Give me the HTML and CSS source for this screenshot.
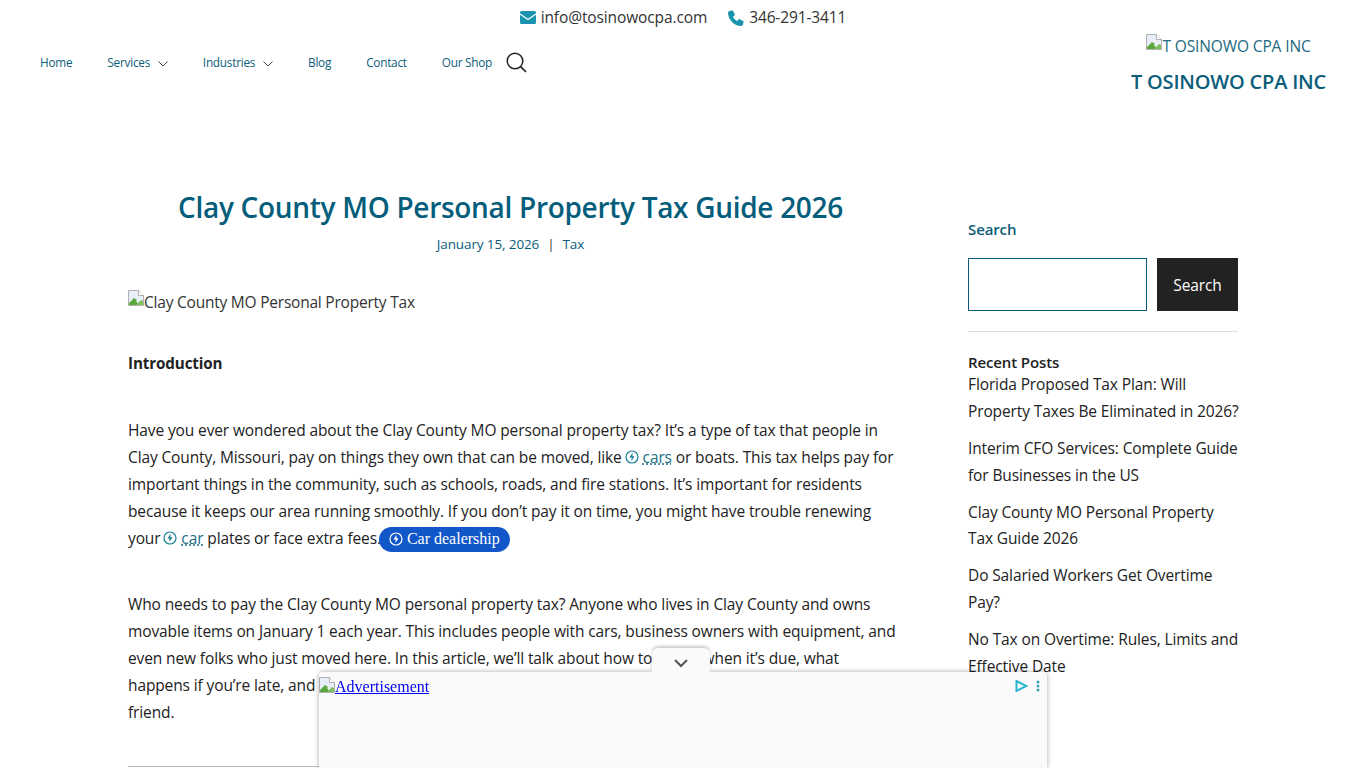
FILE: index.html
```html
<!DOCTYPE html>
<html lang="en">
<head>
  <meta charset="UTF-8">
  <title>Clay County MO Personal Property Tax Guide 2026</title>
  <link rel="stylesheet" href="styles.css">
</head>
<body>

  <!-- Top contact bar -->
  <div class="contact-bar">
    <a href="#" class="contact-item">
      <svg class="contact-icon" width="16" height="13" viewBox="0 0 16 13"><rect width="16" height="13" rx="1.500" fill="#1a93ad"/><path d="M0 3l8 5.500L16 3" fill="none" stroke="#fff" stroke-width="1.100"/></svg>
      info@tosinowocpa.com
    </a>
    <a href="#" class="contact-item">
      <svg class="contact-icon" width="16" height="16" viewBox="0 0 16 16"><path d="M3.600.4 1 1.300C.3 1.600 0 2.200 0 2.900c.3 6.900 6.200 12.800 13.100 13.100.7 0 1.300-.4 1.600-1l.9-2.700c.2-.6 0-1.100-.5-1.400l-3.200-1.700c-.5-.2-1-.1-1.400.3l-1.300 1.500C7.300 10 5.900 8.600 4.900 6.700l1.500-1.300c.4-.4.500-.9.300-1.400L5 .9C4.700.4 4.200.2 3.600.4z" fill="#1a93ad"/></svg>
      346-291-3411
    </a>
  </div>

  <!-- Header -->
  <header class="site-header">
    <nav class="main-nav">
      <a href="#">Home</a>
      <a href="#" class="has-sub">Services <svg width="10" height="6" viewBox="0 0 10 6"><path d="M.5.500 5 5 9.500.500" fill="none" stroke="#444" stroke-width="1"/></svg></a>
      <a href="#" class="has-sub">Industries <svg width="10" height="6" viewBox="0 0 10 6"><path d="M.5.500 5 5 9.500.500" fill="none" stroke="#444" stroke-width="1"/></svg></a>
      <a href="#">Blog</a>
      <a href="#">Contact</a>
      <a href="#">Our Shop</a>
      <svg class="nav-search" width="21" height="21" viewBox="0 0 21 21"><circle cx="9" cy="9" r="7.800" fill="none" stroke="#222" stroke-width="1.500"/><path d="M14.600 14.600 20 20" stroke="#222" stroke-width="1.700"/></svg>
    </nav>
    <div class="logo">
      <div class="logo-img"><svg class="broken" width="16" height="16" viewBox="0 0 16 16"><path d="M.5.500h10l5 5v10H.5z" fill="#e8eef8" stroke="#b0b0b0"/><path d="M10.500.500v5h5" fill="#fff" stroke="#b0b0b0"/><path d="M1 15v-2l5-5 3 2-1 1 3 4z" fill="#5aa83f"/><path d="M8 15l5-5 2 1v4z" fill="#7fbf5f"/></svg>T OSINOWO CPA INC</div>
      <div class="logo-title">T OSINOWO CPA INC</div>
    </div>
  </header>

  <div class="page">
    <!-- Article -->
    <main class="article">
      <h1 class="post-title">Clay County MO Personal Property Tax Guide 2026</h1>
      <p class="post-meta"><a href="#">January 15, 2026</a><span class="sep">|</span><a href="#">Tax</a></p>
      <div class="post-img"><svg class="broken" width="16" height="16" viewBox="0 0 16 16"><path d="M.5.500h10l5 5v10H.5z" fill="#e8eef8" stroke="#b0b0b0"/><path d="M10.500.500v5h5" fill="#fff" stroke="#b0b0b0"/><path d="M1 15v-2l5-5 3 2-1 1 3 4z" fill="#5aa83f"/><path d="M8 15l5-5 2 1v4z" fill="#7fbf5f"/></svg>Clay County MO Personal Property Tax</div>
      <p class="intro"><strong>Introduction</strong></p>
      <p class="first-para">Have you ever wondered about the Clay County MO personal property tax? It’s a type of tax that people in Clay County, Missouri, pay on things they own that can be moved, like <a href="#" class="kw"><svg class="kw-icon" width="14" height="14" viewBox="0 0 14 14"><circle cx="7" cy="7" r="6" fill="none" stroke="#1c7f95" stroke-width="1.200"/><path d="M7.500 2.800 4.500 7.600h2V11l3-4.800h-2z" fill="#1c7f95"/></svg><span>cars</span></a> or boats. This tax helps pay for important things in the community, such as schools, roads, and fire stations. It’s important for residents because it keeps our area running smoothly. If you don’t pay it on time, you might have trouble renewing your <a href="#" class="kw"><svg class="kw-icon" width="14" height="14" viewBox="0 0 14 14"><circle cx="7" cy="7" r="6" fill="none" stroke="#1c7f95" stroke-width="1.200"/><path d="M7.500 2.800 4.500 7.600h2V11l3-4.800h-2z" fill="#1c7f95"/></svg><span>car</span></a> plates or face extra fees.<a href="#" class="pill"><svg width="14" height="14" viewBox="0 0 14 14"><circle cx="7" cy="7" r="6" fill="none" stroke="#fff" stroke-width="1.200"/><path d="M7.500 2.800 4.500 7.600h2V11l3-4.800h-2z" fill="#fff"/></svg>Car dealership</a></p>
      <p class="second-para">Who needs to pay the Clay County MO personal property tax? Anyone who lives in Clay County and owns movable items on January 1 each year. This includes people with cars, business owners with equipment, and even new folks who just moved here. In this article, we’ll talk about how to pay it, when it’s due, what happens if you’re late, and how to get help with it from a tax pro or a<br>friend.</p>
      <div class="toc-top"></div>
    </main>

    <!-- Sidebar -->
    <aside class="sidebar">
      <h2 class="widget-title">Search</h2>
      <form class="search-form">
        <input type="text" class="search-input">
        <button type="button" class="search-btn">Search</button>
      </form>
      <hr class="side-rule">
      <h2 class="recent-title">Recent Posts</h2>
      <ul class="recent-list">
        <li><a href="#">Florida Proposed Tax Plan: Will Property Taxes Be Eliminated in 2026?</a></li>
        <li><a href="#">Interim CFO Services: Complete Guide for Businesses in the US</a></li>
        <li><a href="#">Clay County MO Personal Property Tax Guide 2026</a></li>
        <li><a href="#">Do Salaried Workers Get Overtime Pay?</a></li>
        <li><a href="#">No Tax on Overtime: Rules, Limits and Effective Date</a></li>
      </ul>
    </aside>
  </div>

  <!-- Bottom anchor ad -->
  <div class="anchor-ad">
    <div class="ad-tab"><svg width="14" height="9" viewBox="0 0 14 9"><path d="M1 1l6 6 6-6" fill="none" stroke="#555" stroke-width="2"/></svg></div>
    <a href="#" class="ad-link"><svg class="broken" width="16" height="16" viewBox="0 0 16 16"><path d="M.5.500h10l5 5v10H.5z" fill="#e8eef8" stroke="#b0b0b0"/><path d="M10.500.500v5h5" fill="#fff" stroke="#b0b0b0"/><path d="M1 15v-2l5-5 3 2-1 1 3 4z" fill="#5aa83f"/><path d="M8 15l5-5 2 1v4z" fill="#7fbf5f"/></svg>Advertisement</a>
    <div class="ad-icons">
      <svg width="13" height="12" viewBox="0 0 13 12"><path d="M1.500 1v10l10-5z" fill="none" stroke="#29b6cf" stroke-width="2"/></svg>
      <svg width="4" height="12" viewBox="0 0 4 12"><circle cx="2" cy="2" r="1.500" fill="#3d9fb5"/><circle cx="2" cy="6" r="1.500" fill="#3d9fb5"/><circle cx="2" cy="10" r="1.500" fill="#3d9fb5"/></svg>
    </div>
  </div>

</body>
</html>
```

FILE: styles.css
```css
html, body {
  height: 100%;
  overflow: hidden;
}
body {
  margin: 0;
  font-family: "Open Sans", sans-serif;
  font-size: 15.5px;
  letter-spacing: -.12px;
  color: #222;
  background: #fff;
}
a {
  color: inherit;
  text-decoration: none;
}
.contact-bar {
  display: flex;
  justify-content: center;
  gap: 21px;
  height: 35px;
  line-height: 35px;
  color: #333;
}
.contact-item {
  display: flex;
  align-items: center;
  gap: 5px;
}
.site-header {
  display: flex;
  justify-content: space-between;
  align-items: flex-start;
  padding: 0 40px;
}
.main-nav {
  display: flex;
  align-items: center;
  gap: 35px;
  height: 54px;
  font-size: 11.8px;
  letter-spacing: -.25px;
  color: #0b5d7a;
}
.has-sub svg {
  margin-left: 5px;
}
.nav-search {
  margin-left: -21px;
}
.logo {
  margin-top: -1px;
  text-align: center;
  color: #1d6a82;
}
.logo-img {
  line-height: 22px;
}
.logo-title {
  font-size: 20px;
  font-weight: 600;
  letter-spacing: -.2px;
  line-height: 28px;
  margin-top: 11px;
  color: #0b5d7a;
}
.broken {
  vertical-align: 2px;
}
.page {
  display: flex;
  gap: 75px;
  padding: 0 128px;
  margin-top: 91px;
}
.article {
  width: 765px;
  line-height: 26.88px;
}
.post-title {
  margin: 0;
  font-size: 28px;
  font-weight: 600;
  letter-spacing: -.3px;
  line-height: 40px;
  text-align: center;
  color: #045d7b;
}
.post-meta {
  margin: 4px 0 0;
  text-align: center;
  font-size: 13.5px;
  color: #0b5d7a;
}
.sep {
  margin: 0 8px;
  color: #333;
}
.post-img {
  margin-top: 31px;
  color: #333;
  letter-spacing: -.22px;
}
.article p {
  margin-bottom: 0;
}
.intro {
  margin-top: 34px;
  font-size: 15.2px;
}
.first-para,
.second-para {
  margin-right: -7px;
}
.first-para {
  margin-top: 40.4px;
}
.second-para {
  margin-top: 39.6px;
}
.kw {
  color: #1c6f85;
}
.kw-icon {
  vertical-align: -1px;
  margin: 0 4px 0 -1px;
}
.kw span {
  text-decoration: underline dotted;
}
.pill {
  display: inline-flex;
  align-items: center;
  gap: 4px;
  height: 25px;
  margin-left: -2px;
  padding: 0 10px;
  border-radius: 13px;
  background: #1257c9;
  color: #fff;
  font-family: "Liberation Serif", serif;
  font-size: 16px;
  letter-spacing: 0;
  vertical-align: middle;
}
.toc-top {
  margin-top: 40px;
  border-top: 1px solid #bbb;
}
.sidebar {
  width: 270px;
  padding-top: 30px;
  flex-shrink: 0;
}
.widget-title {
  margin: 0;
  font-size: 15px;
  font-weight: 600;
  line-height: 24px;
  color: #0b5d7a;
}
.search-form {
  display: flex;
  gap: 10px;
  margin-top: 17px;
}
.search-input {
  box-sizing: border-box;
  width: 179px;
  height: 53px;
  border: 1px solid #0b5d7a;
  background: #fff;
}
.search-btn {
  width: 81px;
  border: 0;
  background: #222;
  color: #fff;
  font: 15.5px "Open Sans", sans-serif;
  letter-spacing: -.12px;
}
.side-rule {
  margin: 20px 0 0;
  border: 0;
  border-top: 1px solid #ddd;
}
.recent-title {
  margin: 19px 0 0;
  font-size: 15px;
  font-weight: 600;
  line-height: 22px;
}
.recent-list {
  margin: -2px -4px 0 0;
  padding: 0;
  list-style: none;
  line-height: 26.88px;
}
.recent-list li {
  margin-bottom: 10px;
}
.anchor-ad {
  position: fixed;
  left: 319px;
  bottom: 0;
  box-sizing: border-box;
  width: 728px;
  height: 96px;
  padding: 5px 0 0 0;
  background: #fafafa;
  border-radius: 4px 4px 0 0;
  box-shadow: 0 0 5px rgba(0, 0, 0, .35);
  font-family: "Liberation Serif", serif;
  font-size: 16px;
  letter-spacing: 0;
}
.ad-tab {
  position: absolute;
  top: -24px;
  left: 333px;
  display: flex;
  align-items: center;
  justify-content: center;
  width: 58px;
  height: 24px;
  padding-top: 6px;
  box-sizing: border-box;
  background: #fafafa;
  border-radius: 6px 6px 0 0;
  box-shadow: 0 -2px 3px rgba(0, 0, 0, .2);
}
.ad-link {
  color: #0000ee;
  text-decoration: underline;
}
.ad-link .broken {
  vertical-align: -1px;
}
.ad-icons {
  position: absolute;
  top: 8px;
  right: 7px;
  display: flex;
  gap: 8px;
}
```
